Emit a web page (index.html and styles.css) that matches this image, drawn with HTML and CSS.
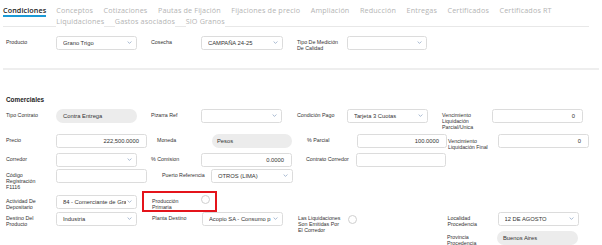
FILE: index.html
```html
<!DOCTYPE html>
<html>
<head>
    <title>Condiciones</title>
    <link rel="stylesheet" href="styles.css">
</head>
<body>
    <!-- pestañas -->
    <div class="tabs">
        <div class="tab active">Condiciones</div>
        <div class="tab-list">
            <div class="tab">Conceptos</div>
            <div class="tab">Cotizaciones</div>
            <div class="tab">Pautas de Fijación</div>
            <div class="tab">Fijaciones de precio</div>
            <div class="tab">Ampliación</div>
            <div class="tab">Reducción</div>
            <div class="tab">Entregas</div>
            <div class="tab">Certificados</div>
            <div class="tab">Certificados RT</div>
            <div class="tab">Liquidaciones</div>
            <div class="tab">Gastos asociados</div>
            <div class="tab">SIO Granos</div>
        </div>
    </div>

    <div class="form">
        <!-- producto -->
        <div class="row row-product">
            <div class="field">
                <div class="lbl">Producto</div>
                <div class="ctrl select"><span>Grano Trigo</span><svg width="5" height="3" viewBox="0 0 5 3"><path d="M0.6 0.5 L2.5 2.4 L4.4 0.5"/></svg></div>
            </div>
            <div class="field">
                <div class="lbl">Cosecha</div>
                <div class="ctrl select w82"><span>CAMPAÑA 24-25</span><svg width="5" height="3" viewBox="0 0 5 3"><path d="M0.6 0.5 L2.5 2.4 L4.4 0.5"/></svg></div>
            </div>
            <div class="field">
                <div class="lbl">Tipo De Medición De Calidad</div>
                <div class="ctrl select w80"><span></span><svg width="5" height="3" viewBox="0 0 5 3"><path d="M0.6 0.5 L2.5 2.4 L4.4 0.5"/></svg></div>
            </div>
        </div>

        <div class="divider"></div>

        <h3 class="heading">Comerciales</h3>

        <div class="row row-contract">
            <div class="field">
                <div class="lbl">Tipo Contrato</div>
                <div class="ctrl pill">Contra Entrega</div>
            </div>
            <div class="field">
                <div class="lbl">Pizarra Ref</div>
                <div class="ctrl select"><span></span><svg width="5" height="3" viewBox="0 0 5 3"><path d="M0.6 0.5 L2.5 2.4 L4.4 0.5"/></svg></div>
            </div>
            <div class="field gap15">
                <div class="lbl">Condición Pago</div>
                <div class="ctrl select"><span>Tarjeta 3 Cuotas</span><svg width="5" height="3" viewBox="0 0 5 3"><path d="M0.6 0.5 L2.5 2.4 L4.4 0.5"/></svg></div>
            </div>
            <div class="field">
                <div class="lbl">Vencimiento Liquidación Parcial/Unica</div>
                <div class="ctrl input w91 num">0</div>
            </div>
        </div>

        <div class="row row-price">
            <div class="field">
                <div class="lbl">Precio</div>
                <div class="ctrl input w91 num">222,500.0000</div>
            </div>
            <div class="field gap10">
                <div class="lbl lbl-wide">Moneda</div>
                <div class="ctrl pill w80">Pesos</div>
            </div>
            <div class="field gap15">
                <div class="lbl">% Parcial</div>
                <div class="ctrl input w90 num">100.0000</div>
            </div>
            <div class="field gap1">
                <div class="lbl lbl-low">Vencimiento Liquidación Final</div>
                <div class="ctrl input w91 num">0</div>
            </div>
        </div>

        <div class="row row-broker">
            <div class="field">
                <div class="lbl">Corredor</div>
                <div class="ctrl select"><span></span><svg width="5" height="3" viewBox="0 0 5 3"><path d="M0.6 0.5 L2.5 2.4 L4.4 0.5"/></svg></div>
            </div>
            <div class="field">
                <div class="lbl">% Comision</div>
                <div class="ctrl input w91 num">0.0000</div>
            </div>
            <div class="field">
                <div class="lbl">Contrato Corredor</div>
                <div class="ctrl input w90"></div>
            </div>
        </div>

        <div class="row row-code">
            <div class="field">
                <div class="lbl">Código Registración F1116</div>
                <div class="ctrl input w91"></div>
            </div>
            <div class="field gap15">
                <div class="lbl lbl-narrow">Puerto Referencia</div>
                <div class="ctrl select w82"><span>OTROS (LIMA)</span><svg width="5" height="3" viewBox="0 0 5 3"><path d="M0.6 0.5 L2.5 2.4 L4.4 0.5"/></svg></div>
            </div>
        </div>

        <div class="row row-activity">
            <div class="field">
                <div class="lbl">Actividad De Depositario</div>
                <div class="ctrl select"><span>84 - Comerciante de Gran</span><svg width="5" height="3" viewBox="0 0 5 3"><path d="M0.6 0.5 L2.5 2.4 L4.4 0.5"/></svg></div>
            </div>
            <div class="highlight">
                <div class="lbl">Producción Primaria</div>
                <div class="radio"></div>
            </div>
        </div>

        <div class="row row-dest">
            <div class="field">
                <div class="lbl">Destino Del Producto</div>
                <div class="ctrl select"><span>Industria</span><svg width="5" height="3" viewBox="0 0 5 3"><path d="M0.6 0.5 L2.5 2.4 L4.4 0.5"/></svg></div>
            </div>
            <div class="field gap15">
                <div class="lbl">Planta Destino</div>
                <div class="ctrl select"><span>Acopio SA - Consumo p</span><svg width="5" height="3" viewBox="0 0 5 3"><path d="M0.6 0.5 L2.5 2.4 L4.4 0.5"/></svg></div>
            </div>
            <div class="field gap15">
                <div class="lbl lbl-check">Las Liquidaciones Son Emitidas Por El Corredor</div>
                <div class="radio radio-row"></div>
            </div>
            <div class="field field-origin">
                <div class="lbl">Localidad Procedencia</div>
                <div class="ctrl select"><span>12 DE AGOSTO</span><svg width="5" height="3" viewBox="0 0 5 3"><path d="M0.6 0.5 L2.5 2.4 L4.4 0.5"/></svg></div>
            </div>
        </div>

        <div class="row row-province">
            <div class="field">
                <div class="lbl">Provincia Procedencia</div>
                <div class="ctrl pill">Buenos Aires</div>
            </div>
        </div>
    </div>
</body>
</html>
```

FILE: styles.css
```css
body {
    margin: 0;
    padding: 0;
    background: #fff;
    font-family: "Liberation Sans", Arial, sans-serif;
    color: #333;
}
.tabs {
    display: flex;
    align-items: flex-start;
    margin: 0 13px 0 3px;
    padding-top: 4.5px;
    border-bottom: 1px solid #e8e8e8;
    font-family: "Open Sans", sans-serif;
    font-size: 7.2px;
    letter-spacing: 0.15px;
    line-height: 10px;
}
.tab {
    color: #b4b4b4;
    white-space: nowrap;
    border-bottom: 1px solid #fff;
}
.tab.active {
    color: #222;
    font-weight: 600;
    letter-spacing: 0.1px;
    border-bottom: 2px solid #1b9ad6;
}
.tab-list {
    flex: 1;
    display: flex;
    flex-wrap: wrap;
    column-gap: 10.5px;
    margin-left: 10px;
    margin-bottom: -1px;
}
.form {
    padding: 0 6px;
}
.row {
    display: flex;
    align-items: flex-start;
    height: 14px;
}
.field {
    display: flex;
    align-items: flex-start;
    margin-left: 14px;
}
.field:first-child {
    margin-left: 0;
}
.field.gap15 { margin-left: 15px; }
.field.gap10 { margin-left: 10px; }
.field.gap1 { margin-left: 1px; }
.lbl {
    width: 50px;
    box-sizing: border-box;
    padding: 3.5px 5px 0 0;
    font-size: 5.3px;
    line-height: 6px;
    color: #333;
}
.lbl-wide { width: 55px; }
.lbl-narrow { width: 49px; }
.lbl-low { padding-top: 4.5px; }
.lbl-check { width: 50px; padding-right: 4px; }
.ctrl {
    width: 81px;
    height: 14px;
    box-sizing: border-box;
    display: flex;
    align-items: center;
    font-size: 5.8px;
    color: #333;
    white-space: nowrap;
    overflow: hidden;
}
.w80 { width: 80px; }
.w82 { width: 82px; }
.w90 { width: 90px; }
.w91 { width: 91px; }
.select,
.input {
    border: 1px solid #dcdcdc;
    border-radius: 2.5px;
    background: #fff;
}
.select {
    padding: 0 4px 0 6px;
}
.select span {
    flex: 1;
    overflow: hidden;
}
.select svg {
    flex: 0 0 auto;
    margin-left: 1px;
}
.select path {
    fill: none;
    stroke: #93a9c6;
    stroke-width: 0.8;
}
.input {
    padding: 0 7px;
}
.num {
    justify-content: flex-end;
}
.pill {
    background: #ececec;
    border-radius: 7px;
    padding: 0 7px;
}
.row-province .pill { padding-left: 6px; }
.row-price .pill { padding-left: 5px; }
.divider {
    margin: 18px -3px 0 -3px;
    height: 2px;
    background: #eeeeee;
}
.heading {
    margin: 26.5px 0 0 0;
    font-size: 6.4px;
    line-height: 8px;
    font-weight: bold;
    color: #222;
}
.row-product { margin-top: 9px; }
.row-contract { margin-top: 4.5px; }
.row-price { margin-top: 11px; }
.row-broker { margin-top: 5px; }
.row-code { margin-top: 2px; }
.row-activity { margin-top: 12px; }
.row-dest { margin-top: 3px; }
.row-province { margin-top: 5px; }
.highlight {
    display: flex;
    align-items: flex-start;
    width: 75px;
    height: 21px;
    box-sizing: border-box;
    margin: -4px 0 0 5px;
    padding-left: 8px;
    border: 2px solid #e4141b;
}
.highlight .lbl {
    width: 49px;
    padding-top: 5px;
    padding-right: 5px;
}
.radio {
    width: 9px;
    height: 9px;
    box-sizing: border-box;
    border: 1px solid #cfcfcf;
    border-radius: 50%;
    margin-top: 2.5px;
    background: #fff;
}
.radio-row {
    margin-top: 3.5px;
}
.field-origin {
    margin-left: 90.5px;
}
.row-province .field {
    margin-left: 441px;
}
```
